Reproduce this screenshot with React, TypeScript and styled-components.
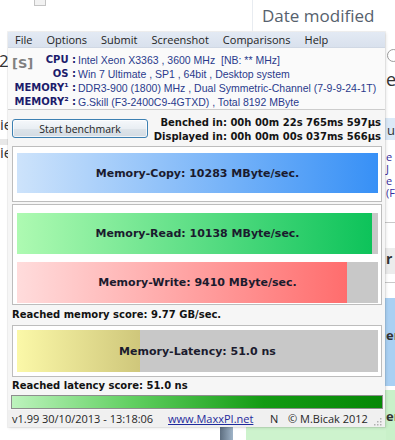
import { Fragment } from "react";
import styled, { createGlobalStyle } from "styled-components";

const SEGOE = `"Open Sans", "Noto Sans", sans-serif`;
const TAHOMA = `"DejaVu Sans", Verdana, sans-serif`;
const ARIAL = `"Liberation Sans", Arial, sans-serif`;

const GlobalStyle = createGlobalStyle`
    html, body {
        margin: 0;
        padding: 0;
    }
    body {
        background: #ffffff;
        font-family: ${SEGOE};
    }
`;

const Desktop = styled.div`
    position: relative;
    width: 395px;
    height: 440px;
    overflow: hidden;
    background: #ffffff;
`;

/* bits of the explorer window lying behind MaxxMEM */
const ColumnHeader = styled.div`
    position: absolute;
    left: 252px;
    top: 0;
    width: 143px;
    height: 31px;
    box-sizing: border-box;
    border-left: 1px solid #e8ecf1;
    padding: 4px 0 0 9px;
    font-family: ${SEGOE};
    font-size: 17px;
    line-height: 23px;
    color: #56616d;
`;

const TopIcon = styled.div`
    position: absolute;
    left: 34px;
    top: -6px;
    width: 10px;
    height: 10px;
    border: 1px solid #c4c4c4;
    background: #f2f2f2;
`;

const BackText = styled.span<{ $x: number; $y: number; $size: number; $color?: string; $bold?: boolean; $lh?: number }>`
    position: absolute;
    left: ${(p) => p.$x}px;
    top: ${(p) => p.$y}px;
    font-family: ${SEGOE};
    font-size: ${(p) => p.$size}px;
    font-weight: ${(p) => (p.$bold ? 700 : 400)};
    line-height: ${(p) => (p.$lh ? `${p.$lh}px` : 1)};
    color: ${(p) => p.$color ?? "#333"};
    white-space: pre;
`;

const BackBlock = styled.div<{ $x: number; $y: number; $w: number; $h: number; $bg: string }>`
    position: absolute;
    left: ${(p) => p.$x}px;
    top: ${(p) => p.$y}px;
    width: ${(p) => p.$w}px;
    height: ${(p) => p.$h}px;
    background: ${(p) => p.$bg};
`;

const RingFragment = styled.div`
    position: absolute;
    left: 387px;
    top: 49px;
    width: 11px;
    height: 11px;
    border: 1px solid #9a9a9a;
    border-radius: 50%;
`;

/* the MaxxMEM window */
const AppWindow = styled.div`
    position: absolute;
    left: 8px;
    top: 32px;
    width: 377px;
    height: 395px;
    display: flex;
    flex-direction: column;
    background: #f6f6f6;
    box-shadow: 0 0 0 1px rgba(0, 0, 0, 0.05), 1px 1px 3px rgba(0, 0, 0, 0.12);
`;

const MenuBar = styled.nav`
    flex: none;
    display: flex;
    height: 16px;
    box-sizing: border-box;
    background: linear-gradient(#e3eaf4, #d9e1ed);
    border-bottom: 1px solid #d0d8e4;
    font-family: ${SEGOE};
    font-size: 11px;
    line-height: 15px;
    color: #1e1e1e;
`;

const MenuItem = styled.span`
    padding: 0 7px;
`;

const InfoGrid = styled.div`
    display: grid;
    grid-template-columns: 22px 42px 1fr;
    padding: 5px 0 0 4px;
    line-height: 14px;
    border-bottom: 1px solid #cdcdcd;
    background: #fafafa;
`;

const SystemTag = styled.div`
    grid-column: 1;
    grid-row: 1 / 3;
    align-self: start;
    margin-top: 3px;
    font-family: ${TAHOMA};
    font-weight: 700;
    font-size: 13px;
    line-height: 16px;
    color: #808080;
`;

const InfoLabel = styled.div<{ $wide?: boolean }>`
    grid-column: ${(p) => (p.$wide ? "1 / 3" : "2")};
    text-align: right;
    font-family: ${TAHOMA};
    font-weight: 700;
    font-size: 10px;
    color: #1c1c6c;
    white-space: nowrap;
`;

const InfoValue = styled.div`
    grid-column: 3;
    padding-left: 2px;
    font-family: ${ARIAL};
    font-size: 10.5px;
    color: #2a3a8c;
    white-space: pre;
`;

const ActionRow = styled.div`
    display: flex;
    justify-content: space-between;
    align-items: flex-start;
    height: 34px;
    box-sizing: border-box;
    padding: 6px 4px 0 4px;
`;

const StartButton = styled.button`
    width: 136px;
    height: 19px;
    margin-top: 3px;
    padding: 0;
    border: 1px solid #3d80b2;
    border-radius: 3px;
    background: linear-gradient(#f5f8fb, #e9eef3 50%, #dde4ea 50%, #d3dbe3);
    box-shadow: inset 0 0 0 1px rgba(255, 255, 255, 0.7);
    font-family: ${SEGOE};
    font-size: 10.5px;
    line-height: 16px;
    color: #1e1e1e;
`;

const Timings = styled.div`
    text-align: right;
    font-family: ${TAHOMA};
    font-weight: 700;
    font-size: 10px;
    line-height: 14px;
    color: #141414;
    white-space: nowrap;
`;

const Panel = styled.div<{ $pad: string; $top: number }>`
    margin: ${(p) => p.$top}px 3px 0 4px;
    padding: ${(p) => p.$pad};
    display: flex;
    flex-direction: column;
    gap: 8px;
    background: #ffffff;
    border: 1px solid #bdbdbd;
`;

const Bar = styled.div<{ $height: number }>`
    display: grid;
    height: ${(p) => p.$height}px;
    background: #c8c8c8;
    & > * {
        grid-area: 1 / 1;
    }
`;

const BarFill = styled.div<{ $from: string; $to: string }>`
    height: 100%;
    background: linear-gradient(to right, ${(p) => p.$from}, ${(p) => p.$to});
`;

const BarLabel = styled.div`
    align-self: center;
    justify-self: center;
    font-family: ${TAHOMA};
    font-weight: 700;
    font-size: 11px;
    color: #1b1b2e;
    white-space: nowrap;
`;

const ScoreLine = styled.div<{ $height: number }>`
    height: ${(p) => p.$height}px;
    line-height: ${(p) => p.$height}px;
    padding-left: 4px;
    font-family: ${TAHOMA};
    font-weight: 700;
    font-size: 10px;
    color: #121212;
`;

const ScoreBar = styled.div`
    margin: 0 2px 0 3px;
    height: 14px;
    box-sizing: border-box;
    border: 1px solid #8e8e8e;
    background: linear-gradient(to right, #bdf3bd, #62d062 32%, #139b13 68%, #068806);
`;

const StatusBar = styled.footer`
    margin-top: 1px;
    height: 17px;
    display: flex;
    align-items: center;
    background: #f0f0f0;
    font-family: ${SEGOE};
    font-size: 11px;
    color: #262626;
`;

const StatusCell = styled.span<{ $width?: number }>`
    flex: ${(p) => (p.$width ? "none" : "1")};
    width: ${(p) => (p.$width ? `${p.$width}px` : "auto")};
    padding-left: 4px;
    box-sizing: border-box;
    white-space: nowrap;
`;

const StatusLink = styled.a`
    color: #1f2a9c;
    text-decoration: underline;
`;

const Grip = styled.svg`
    flex: none;
    margin: 6px 3px 0 0;
`;

type BarData = { label: string; percent: number; from: string; to: string };

const memoryBars: BarData[] = [
    { label: "Memory-Read: 10138 MByte/sec.", percent: 98.3, from: "#aefab2", to: "#0dc35a" },
    { label: "Memory-Write: 9410 MByte/sec.", percent: 91.4, from: "#ffdcdc", to: "#ff6d6d" },
];

const info = [
    { label: "CPU :", value: "Intel Xeon X3363 , 3600 MHz  [NB: ** MHz]", wide: false },
    { label: "OS :", value: "Win 7 Ultimate , SP1 , 64bit , Desktop system", wide: false },
    { label: "MEMORY\u00b9 :", value: "DDR3-900 (1800) MHz , Dual Symmetric-Channel (7-9-9-24-1T)", wide: true },
    { label: "MEMORY\u00b2 :", value: "G.Skill (F3-2400C9-4GTXD) , Total 8192 MByte", wide: true },
];

const App: React.FC = () => {
    return (
        <Desktop>
            <GlobalStyle />
            <TopIcon />
            <ColumnHeader>Date modified</ColumnHeader>
            <BackText $x={-1} $y={52} $size={17}>2</BackText>
            <BackText $x={0} $y={117} $size={15}>ie</BackText>
            <BackBlock $x={0} $y={139} $w={8} $h={6} $bg="#e8e8e8" />
            <BackText $x={0} $y={145} $size={15}>ie</BackText>

            <RingFragment />
            <BackText $x={386} $y={70} $size={18}>e'</BackText>
            <BackBlock $x={385} $y={118} $w={10} $h={22} $bg="#dbe9f7" />
            <BackText $x={387} $y={124} $size={13}>u</BackText>
            <BackText $x={386} $y={151} $size={11} $lh={12} $color="#3a2f9e">
                {"e\nJ\ne\n(F"}
            </BackText>
            <BackBlock $x={385} $y={222} $w={10} $h={1} $bg="#c9c9c9" />
            <BackBlock $x={385} $y={248} $w={10} $h={26} $bg="#ececec" />
            <BackText $x={386} $y={252} $size={14} $bold>r</BackText>
            <BackBlock $x={385} $y={282} $w={10} $h={1} $bg="#c9c9c9" />
            <BackBlock $x={385} $y={298} $w={10} $h={88} $bg="#a9d0f3" />
            <BackText $x={386} $y={329} $size={13} $bold>er</BackText>
            <BackBlock $x={385} $y={390} $w={10} $h={50} $bg="#c9f1c9" />
            <BackText $x={386} $y={410} $size={13} $bold>er</BackText>
            <BackBlock $x={220} $y={427} $w={13} $h={13} $bg="linear-gradient(to right, #5d6e80, #9fb4c8)" />
            <BackBlock $x={246} $y={427} $w={140} $h={13} $bg="#cdf3cd" />

            <AppWindow>
                <MenuBar>
                    <MenuItem>File</MenuItem>
                    <MenuItem>Options</MenuItem>
                    <MenuItem>Submit</MenuItem>
                    <MenuItem>Screenshot</MenuItem>
                    <MenuItem>Comparisons</MenuItem>
                    <MenuItem>Help</MenuItem>
                </MenuBar>

                <InfoGrid>
                    <SystemTag>[S]</SystemTag>
                    {info.map((row) => (
                        <Fragment key={row.label}>
                            <InfoLabel $wide={row.wide}>{row.label}</InfoLabel>
                            <InfoValue>{row.value}</InfoValue>
                        </Fragment>
                    ))}
                </InfoGrid>

                <ActionRow>
                    <StartButton>Start benchmark</StartButton>
                    <Timings>
                        <div>Benched in: 00h 00m 22s 765ms 597µs</div>
                        <div>Displayed in: 00h 00m 00s 037ms 566µs</div>
                    </Timings>
                </ActionRow>

                <Panel $top={2} $pad="6px 3px 8px 4px">
                    <Bar $height={40}>
                        <BarFill $from="#cde3fb" $to="#3790f6" style={{ width: "100%" }} />
                        <BarLabel>Memory-Copy: 10283 MByte/sec.</BarLabel>
                    </Bar>
                </Panel>

                <Panel $top={2} $pad="8px 3px 1px 4px">
                    {memoryBars.map((b) => (
                        <Bar key={b.label} $height={41}>
                            <BarFill $from={b.from} $to={b.to} style={{ width: `${b.percent}%` }} />
                            <BarLabel>{b.label}</BarLabel>
                        </Bar>
                    ))}
                </Panel>

                <ScoreLine $height={19}>Reached memory score: 9.77 GB/sec.</ScoreLine>

                <Panel $top={1} $pad="4px 3px 4px 4px">
                    <Bar $height={42}>
                        <BarFill $from="#fbf8a8" $to="#cfc77b" style={{ width: "34%" }} />
                        <BarLabel>Memory-Latency: 51.0 ns</BarLabel>
                    </Bar>
                </Panel>

                <ScoreLine $height={18}>Reached latency score: 51.0 ns</ScoreLine>
                <ScoreBar />

                <StatusBar>
                    <StatusCell $width={30}>v1.99</StatusCell>
                    <StatusCell $width={126}>30/10/2013 - 13:18:06</StatusCell>
                    <StatusCell $width={102}>
                        <StatusLink>www.MaxxPI.net</StatusLink>
                    </StatusCell>
                    <StatusCell $width={18}>N</StatusCell>
                    <StatusCell>© M.Bicak 2012</StatusCell>
                    <Grip width="9" height="9" viewBox="0 0 9 9">
                        {[
                            [7, 1], [4, 4], [7, 4], [1, 7], [4, 7], [7, 7],
                        ].map(([x, y]) => (
                            <rect key={`${x}-${y}`} x={x} y={y} width="1.5" height="1.5" fill="#b0b0b0" />
                        ))}
                    </Grip>
                </StatusBar>
            </AppWindow>
        </Desktop>
    );
};

export default App;
